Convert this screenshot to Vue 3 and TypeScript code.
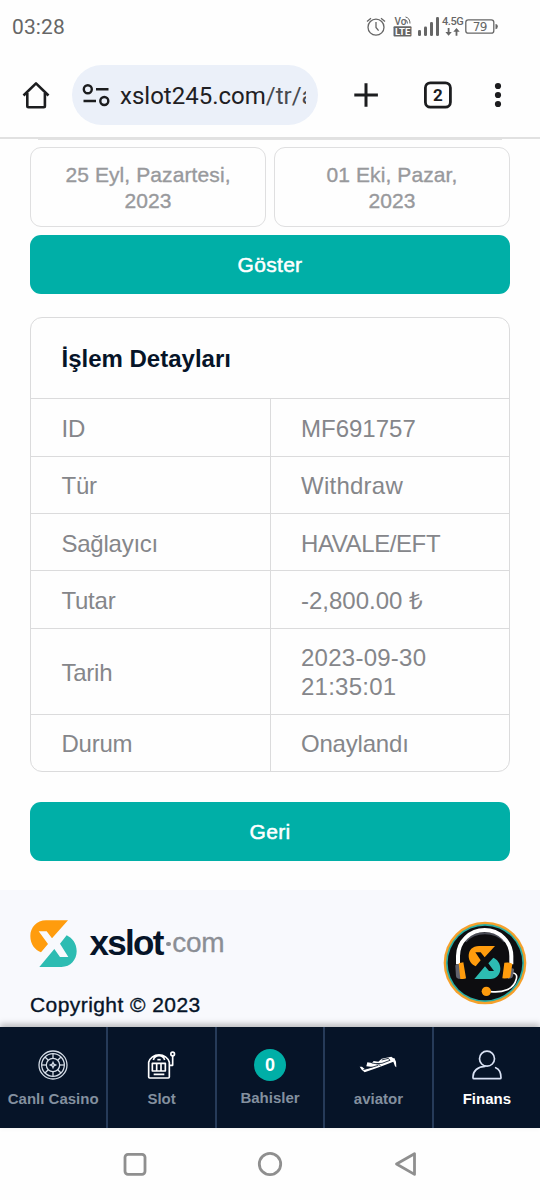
<script setup lang="ts">
interface Detail {
  label: string
  value: string
  fit?: string
}

const dates: string[][] = [
  ['25 Eyl, Pazartesi,', '2023'],
  ['01 Eki, Pazar,', '2023'],
]

const details: Detail[] = [
  { label: 'ID', value: 'MF691757' },
  { label: 'Tür', value: 'Withdraw', fit: 'loose' },
  { label: 'Sağlayıcı', value: 'HAVALE/EFT', fit: 'tight' },
  { label: 'Tutar', value: '-2,800.00 ₺' },
  { label: 'Tarih', value: '2023-09-30 21:35:01', fit: 'tall loose' },
  { label: 'Durum', value: 'Onaylandı', fit: 'snug' },
]
const spokes: number[] = [0, 45, 90, 135, 180, 225, 270, 315]
</script>

<template>
  <div class="screen">
    <header class="status">
      <span class="clock">03:28</span>
      <svg class="status-icons" width="140" height="30" viewBox="360 11 140 30" fill="none" stroke="#666" stroke-width="1.3">
        <circle cx="376" cy="27.2" r="8" />
        <path d="M376 22v5.5l2.6 3.2M367 21.5l4-3.3M385 21.5l-4-3.3" />
        <g fill="#666" stroke="none">
          <text x="394.5" y="25" class="tiny vo">Vo</text>
          <rect x="393.5" y="26.3" width="18" height="10.2" rx="1" />
          <text x="395" y="34.9" class="tiny lte">LTE</text>
          <rect x="418" y="30" width="3" height="6" rx="1.3" />
          <rect x="424" y="26.5" width="3" height="9.5" rx="1.3" />
          <rect x="430" y="22" width="3" height="14" rx="1.3" />
          <rect x="436" y="17" width="3" height="19" rx="1.3" />
          <text x="442" y="24.7" class="tiny net">4.5G</text>
          <path d="M447.7 28h1.8v4h2.3l-3.2 3.8-3.2-3.8h2.3zM455.6 35.8h1.8v-4h2.3l-3.2-3.8-3.2 3.8h2.3z" />
          <path d="M495.5 24q2.3 0 2.3 2.6t-2.3 2.6z" />
          <text x="472.8" y="31" class="tiny bat">79</text>
        </g>
        <path d="M404.5 19.5q3 .5 3 4M405.5 17q4.5 1 4.5 6.5" stroke-width="1" />
        <rect x="465.8" y="19.8" width="28" height="13.4" rx="2.5" />
      </svg>
    </header>

    <div class="toolbar">
      <svg class="home" width="30" height="30" viewBox="21 80 30 30" fill="none" stroke="#1c1d1f" stroke-width="2.6" stroke-linejoin="round">
        <path d="M23.5 95.5L36 83.4l12.5 12.1M27.3 93v13q0 1.2 1.2 1.2h15.2q1.2 0 1.2-1.2V93" />
      </svg>
      <div class="address">
        <svg width="28" height="24" viewBox="82 83 28 24" fill="none" stroke="#1c1d1f" stroke-width="2.4">
          <circle cx="87.8" cy="89.2" r="4" /><path d="M96 89.2h12.5M83.5 101h12.5" /><circle cx="104.3" cy="101" r="4" />
        </svg>
        <span class="url">xslot245.com<span class="path">/tr/a</span></span>
      </div>
      <svg class="actions" width="160" height="34" viewBox="350 78 160 34" fill="none" stroke="#1c1d1f" stroke-width="3">
        <path d="M354.3 95h23.6M366 83.2v23.6" />
        <rect x="425.4" y="82.8" width="25" height="24.4" rx="5" stroke-width="2.8" />
        <g fill="#1c1d1f" stroke="none">
          <text x="438" y="101" class="tab-count">2</text>
          <circle cx="498" cy="86" r="3.1" /><circle cx="498" cy="95" r="3.1" /><circle cx="498" cy="104" r="3.1" />
        </g>
      </svg>
    </div>

    <main class="content">
      <div class="peek"></div>
      <div class="dates">
        <div v-for="(d, i) in dates" :key="i" class="date">
          <span v-for="line in d" :key="line">{{ line }}</span>
        </div>
      </div>
      <button class="button">Göster</button>
      <section class="card">
        <h2>İşlem Detayları</h2>
        <div v-for="d in details" :key="d.label" class="row" :class="d.fit">
          <div class="cell label"><span>{{ d.label }}</span></div>
          <div class="cell value"><span>{{ d.value }}</span></div>
        </div>
      </section>
      <button class="button back">Geri</button>
    </main>

    <footer class="footer">
      <div class="brand">
        <svg width="47" height="48" viewBox="92 59 141 144">
          <path fill="#ff9c0d" d="M206 60H140C112 60 93 82 93 107c0 25 14 42 32 49l21-25-28-38h24l16 21z" />
          <path fill="#2dbcb2" d="M120 200h66c28 0 46-22 46-47 0-24-13-40-30-48l-20 25 25 40h-25l-17-24z" />
        </svg>
        <span class="word">xslot</span><i class="dot"></i><span class="com">com</span>
      </div>
      <p class="copyright">Copyright © 2023</p>
      <svg class="support" width="84" height="84" viewBox="40 36 252 252">
        <circle cx="166" cy="162" r="124" fill="#f5a02b" />
        <circle cx="166" cy="162" r="117" fill="#2bafa5" />
        <circle cx="166" cy="162" r="112" fill="#0d0d10" />
        <path d="M108 98Q128 73 166 73t58 25" fill="none" stroke="#4a4c56" stroke-width="6" />
        <path d="M85 166v-25a80 78 0 0 1 160 0v25" fill="none" stroke="#fff" stroke-width="12" />
        <path fill="#ff9c0d" d="M196 111h-48c-20 0-31 13-31 30 0 15 10 26 21 31l15-18-16-24h16l12 15z" />
        <path fill="#2dbcb2" d="M134 210h48c18 0 30-14 30-31 0-16-9-28-21-33l-15 17 17 23h-15l-12-14z" />
        <path fill="#60626d" d="M77 170q0-5 8-5l9 1 5 44-13-1q-7-1-7-7zM253 184q2-4-5-6l-9 1-4 31 9-2q5-2 6-7z" />
        <path fill="#ff9c0d" d="M87 163l14-3 8 47q0 3-17 3zM224 161q21-2 24 4l-6 39q-3 5-24 4z" />
        <path d="M251 192q13 3 9 18c-8 32-41 42-78 38" fill="none" stroke="#fff" stroke-width="5" />
        <circle cx="170" cy="247" r="14" fill="#ff9c0d" />
      </svg>
    </footer>

    <nav class="tabs">
      <div class="tab">
        <svg width="30" height="30" viewBox="113 89 90 90" fill="none" stroke="#d6dee8" stroke-width="3.8">
          <circle cx="158" cy="134" r="42" /><circle cx="158" cy="134" r="34" /><circle cx="158" cy="134" r="20" />
          <path v-for="a in spokes" :key="a" d="M158 114v-14" :transform="`rotate(${a} 158 134)`" />
          <path d="M158 126l2.5 5.5L166 134l-5.5 2.5L158 142l-2.5-5.5L150 134l5.5-2.5z" />
        </svg>
        <span>Canlı Casino</span>
      </div>
      <div class="tab">
        <svg width="30" height="30" viewBox="441 89 90 90" fill="none" stroke="#fff" stroke-width="5" stroke-linejoin="round">
          <path d="M446 170V126a32 30 0 0 1 62 0v44q0 3-3 3h-56q-3 0-3-3zM457 129h39v23h-39zM470 129v23M483 129v23M460 119q4-13 17-13t17 13M461 162h32M509 135h9v-28" />
          <path d="M472 118h10" />
          <circle cx="518" cy="101" r="5.5" />
        </svg>
        <span>Slot</span>
      </div>
      <div class="tab bets"><b class="count">0</b><span>Bahisler</span></div>
      <div class="tab">
        <svg width="40" height="30" viewBox="432 89 120 90">
          <path fill="#fff" d="M437 139l7 0 9 8 25-7-21-2 3-12 14 2 5-6 14 2 10-9 29-6 6 5 3-1 5 11 1 17-4-3-5-14-39 15-47 17-9-8z" />
          <path d="M503 119l20-5 5 6-24 9-17 1M473 128l20 3 7 6M448 148l45-13" fill="none" stroke="#061428" stroke-width="2.5" />
        </svg>
        <span>aviator</span>
      </div>
      <div class="tab active">
        <svg width="30" height="30" viewBox="772 89 90 90" fill="none" stroke="#d9e2f5" stroke-width="5" stroke-linejoin="round" stroke-linecap="round">
          <circle cx="817" cy="115" r="22.5" />
          <path d="M811 138c-22 1-36 14-36 31v3q0 3 3 3h78q3 0 3-3c0-17-4-25-16-30" />
        </svg>
        <span>Finans</span>
      </div>
    </nav>

    <div class="system">
      <svg width="300" height="30" viewBox="120 1149 300 30" fill="none" stroke="#8f8f8f" stroke-width="2.8" stroke-linejoin="round">
        <rect x="125" y="1154.3" width="20" height="20" rx="3" />
        <circle cx="270" cy="1164" r="10.7" />
        <path d="M414.5 1153.8v20.6L396.500 1164z" />
      </svg>
    </div>
  </div>
</template>

<style>
body {
  margin: 0;
  background: #fff;
}
</style>

<style scoped>
.screen {
  width: 540px;
  height: 1200px;
  overflow: hidden;
  display: flex;
  flex-direction: column;
  background: #fefefe;
  font-family: "Liberation Sans", Arial, sans-serif;
}
.status {
  height: 52px;
  display: flex;
  justify-content: space-between;
  align-items: flex-start;
  padding: 0 40px 0 12px;
  box-sizing: border-box;
  font-family: Roboto, sans-serif;
}
.clock {
  margin-top: 14px;
  font-size: 21px;
  line-height: 26px;
  letter-spacing: 0.1px;
  color: #666;
}
.status-icons { margin-top: 11px; }
.tiny { font-family: Roboto, sans-serif; font-weight: 500; }
.vo { font-size: 10px; }
.lte { font-size: 9.5px; fill: #fff; font-weight: 700; }
.net { font-size: 11px; letter-spacing: -0.4px; }
.bat { font-size: 12px; font-family: "DejaVu Sans", sans-serif; font-weight: 400; letter-spacing: -0.6px; }
.toolbar {
  height: 85px;
  display: flex;
  align-items: center;
  border-bottom: 2px solid #e1e1e1;
  padding: 0 30px 0 21px;
}
.home { margin-right: 21px; }
.address {
  width: 246px;
  height: 60px;
  box-sizing: border-box;
  border-radius: 30px;
  background: #ebf0f9;
  display: flex;
  align-items: center;
  padding: 0 12px 0 10px;
  margin-right: 32px;
}
.address svg { flex: none; }
.url {
  width: 186px;
  margin: 2px 0 0 10px;
  overflow: hidden;
  white-space: nowrap;
  font-family: Roboto, sans-serif;
  font-size: 24px;
  line-height: 30px;
  color: #1f2023;
}
.path { color: #484a50; }
.tab-count { font: 700 17px Roboto, sans-serif; text-anchor: middle; }
.content {
  height: 751px;
  flex: none;
  box-sizing: border-box;
  padding: 0 30px;
}
.peek { height: 1px; margin: 0 8px 7.4px; background: #e2e2e2; }
.dates { display: flex; gap: 8px; }
.date {
  flex: 1;
  height: 80px;
  box-sizing: border-box;
  border: 1.5px solid #dfdfe0;
  border-radius: 11px;
  display: flex;
  flex-direction: column;
  align-items: center;
  padding-top: 14px;
  font-size: 21px;
  line-height: 25.5px;
  letter-spacing: 0.1px;
  color: #98999c;
  -webkit-text-stroke: 0.35px #98999c;
}
.button {
  display: block;
  width: 100%;
  height: 58.5px;
  margin: 8px 0 0;
  padding: 0;
  border: 0;
  border-radius: 11px;
  background: #00afa7;
  color: #fff;
  font: 21px/58px "Liberation Sans", Arial, sans-serif;
  letter-spacing: 0.3px;
  -webkit-text-stroke: 0.5px #fff;
}
.card {
  margin-top: 23px;
  border: 1.5px solid #dbdbdc;
  border-radius: 12px;
  overflow: hidden;
}
.card h2 {
  height: 80.5px;
  margin: 0;
  padding-left: 30.5px;
  font-size: 24px;
  line-height: 82px;
  color: #061428;
}
.row {
  height: 57.3px;
  box-sizing: border-box;
  border-top: 1.5px solid #dbdbdc;
  display: flex;
  font-size: 24px;
  line-height: 29px;
  color: #85868a;
}
.row.tall { height: 86px; }
.cell {
  flex: 1;
  box-sizing: border-box;
  padding: 2px 60px 0 30.5px;
  display: flex;
  align-items: center;
}
.label { letter-spacing: -0.25px; }
.cell.value { border-left: 1.5px solid #dbdbdc; }
.tight .value { letter-spacing: -0.4px; }
.snug .value { letter-spacing: -0.2px; }
.loose .value { letter-spacing: 0.25px; }
.back { margin-top: 30.5px; }
.footer {
  position: relative;
  height: 136.5px;
  flex: none;
  box-sizing: border-box;
  padding: 30px 30px 0;
  background: #f8f9fd;
}
.brand { display: flex; height: 48px; align-items: center; }
.word {
  margin: -3px 0 0 12.5px;
  font-size: 35px;
  font-weight: 700;
  line-height: 40px;
  letter-spacing: -1.7px;
  color: #061428;
}
.dot { width: 4.5px; height: 4.5px; margin: 0 1.5px 0 3.5px; border-radius: 50%; background: #8b8e95; }
.com { margin-top: -2px; font-size: 28px; line-height: 40px; letter-spacing: -0.3px; color: #8b8e95; -webkit-text-stroke: 0.3px #8b8e95; }
.copyright {
  margin: 24px 0 0;
  font-size: 21px;
  line-height: 26px;
  letter-spacing: 0.43px;
  color: #061428;
  -webkit-text-stroke: 0.35px #061428;
}
.support { position: absolute; left: 443px; top: 31px; }
.tabs {
  position: relative;
  height: 101.5px;
  flex: none;
  display: flex;
  background: #061428;
  box-shadow: 0 -3px 6px rgba(0, 0, 0, 0.25);
}
.tab {
  flex: 1;
  box-sizing: border-box;
  border-left: 2px solid #263b59;
  display: flex;
  flex-direction: column;
  align-items: center;
  padding-top: 23px;
  font-size: 15px;
  font-weight: 700;
  line-height: 20px;
  color: #83909f;
  white-space: nowrap;
}
.tab:first-child { border-left: 0; }
.tab span { margin-top: 9px; }
.count {
  width: 32px;
  height: 32px;
  margin-top: -1px;
  border-radius: 50%;
  background: #00afa7;
  color: #fff;
  font-size: 18px;
  line-height: 32px;
  text-align: center;
}
.bets span { margin-top: 7px; }
.tab.active { color: #fff; }
.system { flex: 1; display: flex; justify-content: center; padding-top: 21px; }
</style>
